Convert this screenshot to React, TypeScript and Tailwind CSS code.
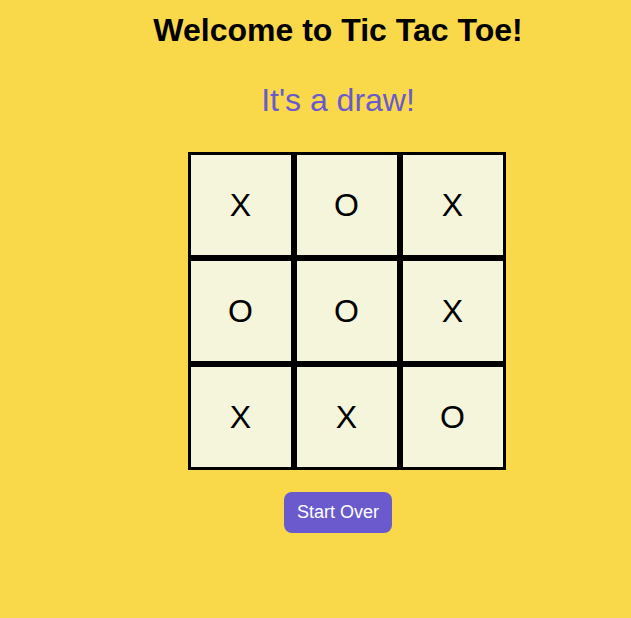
import React from 'react';

const board = ['X', 'O', 'X', 'O', 'O', 'X', 'X', 'X', 'O'];

export default function App() {
  return (
    <div
      className="min-h-[618px] w-full bg-[#f9d84a] pl-[45px] flex flex-col items-center"
      style={{ fontFamily: '"Liberation Sans", Arial, sans-serif' }}
    >
      <h1 className="mt-[12px] text-[32px] leading-[36px] font-bold text-black">
        Welcome to Tic Tac Toe!
      </h1>
      <p className="mt-[34px] text-[32px] leading-[36px] text-[#6a5acd]">It's a draw!</p>
      <div className="mt-[34px] ml-[17px] grid grid-cols-[repeat(3,106px)]">
        {board.map((v, i) => (
          <div
            key={i}
            className="w-[106px] h-[106px] border-[3px] border-black bg-[#f5f5dc] flex items-center justify-center text-[32px] text-black"
          >
            {v}
          </div>
        ))}
      </div>
      <button className="mt-[22px] px-[13px] h-[41px] rounded-[8px] bg-[#6a5acd] text-white text-[18px] leading-[21px]">
        Start Over
      </button>
    </div>
  );
}
